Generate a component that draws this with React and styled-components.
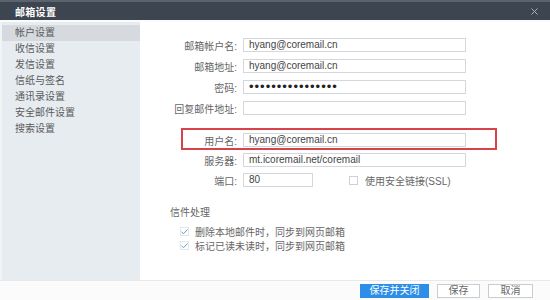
import React from 'react';
import styled, { createGlobalStyle } from 'styled-components';

const GlobalStyle = createGlobalStyle`
  html, body {
    margin: 0;
    padding: 0;
    background: #ffffff;
  }
  body {
    font-family: "Liberation Sans", "Noto Sans CJK SC", sans-serif;
    font-size: 10px;
    color: #666;
  }
`;

const Window = styled.div`
  width: 550px;
  height: 300px;
  display: flex;
  flex-direction: column;
  background: #fbfbfc;
  overflow: hidden;
`;

const TitleBar = styled.div`
  height: 18px;
  border-top: 2px solid #5b646e;
  background: #3c4550;
  display: flex;
  align-items: center;
  justify-content: space-between;
  padding: 0 12px 0 15px;
`;

const Title = styled.div`
  color: #ffffff;
  font-weight: bold;
  font-size: 10px;
  letter-spacing: 0.3px;
`;

const Body = styled.div`
  display: flex;
  height: 258px;
  margin-top: 2px;
  border-bottom: 1px solid #e6e8ea;
`;

const Sidebar = styled.div`
  width: 138px;
  border-left: 2px solid #f1f4f6;
  background: #e7ecf1;
  padding-top: 3px;
`;

const NavItem = styled.div`
  height: 16px;
  line-height: 16px;
  padding-left: 13px;
  color: #5a5a5a;
  background: ${p => (p.$active ? '#d6dadf' : 'transparent')};
`;

const Panel = styled.div`
  flex: 1;
  background: #ffffff;
  padding: 16px 0 0 2px;
`;

const Row = styled.div`
  position: relative;
  display: flex;
  align-items: center;
  gap: 6px;
  width: fit-content;
  height: 14px;
  margin-top: ${p => p.$gap ?? 7}px;

  ${p => p.$highlight && `
    &::after {
      content: '';
      position: absolute;
      left: 39px;
      right: -31px;
      top: -5px;
      bottom: -3px;
      border: 2px solid #d8434b;
      pointer-events: none;
    }
  `}
`;

const Label = styled.div`
  width: 95px;
  text-align: right;
  color: #666;
  white-space: nowrap;
`;

const Field = styled.div`
  box-sizing: border-box;
  width: ${p => p.$width ?? 223}px;
  height: 14px;
  border: 1px solid #d4d8dd;
  padding: 0 5px;
  line-height: 12px;
  color: #444;
  white-space: nowrap;
  overflow: hidden;
`;

const Dots = styled.span`
  font-size: 13px;
  letter-spacing: 1px;
  color: #222;
  line-height: 12px;
`;

const Box = styled.span`
  box-sizing: border-box;
  width: 9px;
  height: 9px;
  border: 1px solid #cdd1d5;
  margin-left: 30px;
  background: #fff;
`;

const BoxText = styled.span`
  margin-left: 1px;
  color: #666;
`;

const Section = styled.div`
  margin-top: 19px;
  padding-left: 28px;
`;

const SectionTitle = styled.div`
  height: 14px;
  line-height: 14px;
  color: #666;
`;

const CheckRow = styled.div`
  display: flex;
  align-items: center;
  gap: 6px;
  height: 14px;
  padding-left: 10px;
  margin-top: ${p => p.$first ? 4 : 0}px;
  color: #666;
`;

const Footer = styled.div`
  flex: 1;
  display: flex;
  justify-content: flex-end;
  align-items: flex-start;
  gap: 8px;
  padding: 3px 17px 0 0;
`;

const Button = styled.div`
  box-sizing: border-box;
  width: ${p => p.$width}px;
  height: 14px;
  line-height: 12px;
  text-align: center;
  font-size: 10px;
  border: 1px solid ${p => (p.$primary ? '#2d8ee8' : '#c9cdd2')};
  background: ${p => (p.$primary ? '#2d8ee8' : '#ffffff')};
  color: ${p => (p.$primary ? '#ffffff' : '#666')};
`;

const CloseIcon = () => (
  <svg width="7" height="7" viewBox="0 0 7 7">
    <path d="M0.5 0.5 L6.5 6.5 M6.5 0.5 L0.5 6.5" stroke="#a9b0b8" strokeWidth="1" />
  </svg>
);

const CheckIcon = () => (
  <svg width="9" height="9" viewBox="0 0 9 9">
    <rect x="0.5" y="0.5" width="8" height="8" fill="#fff" stroke="#e3e7eb" />
    <path d="M1.5 4.8 L3.6 6.6 L7.6 2.4" fill="none" stroke="#6a9bd1" strokeWidth="1" />
  </svg>
);

const navItems = ['帐户设置', '收信设置', '发信设置', '信纸与签名', '通讯录设置', '安全邮件设置', '搜索设置'];

export default function App() {
  return (
    <>
      <GlobalStyle />
      <Window>
        <TitleBar>
          <Title>邮箱设置</Title>
          <CloseIcon />
        </TitleBar>
        <Body>
          <Sidebar>
            {navItems.map((item, i) => (
              <NavItem key={item} $active={i === 0}>{item}</NavItem>
            ))}
          </Sidebar>
          <Panel>
            <Row $gap={0}>
              <Label>邮箱帐户名:</Label>
              <Field>hyang@coremail.cn</Field>
            </Row>
            <Row>
              <Label>邮箱地址:</Label>
              <Field>hyang@coremail.cn</Field>
            </Row>
            <Row>
              <Label>密码:</Label>
              <Field><Dots>••••••••••••••••</Dots></Field>
            </Row>
            <Row>
              <Label>回复邮件地址:</Label>
              <Field />
            </Row>
            <Row $gap={18} $highlight>
              <Label>用户名:</Label>
              <Field>hyang@coremail.cn</Field>
            </Row>
            <Row $gap={6}>
              <Label>服务器:</Label>
              <Field>mt.icoremail.net/coremail</Field>
            </Row>
            <Row $gap={6}>
              <Label>端口:</Label>
              <Field $width={70}>80</Field>
              <Box />
              <BoxText>使用安全链接(SSL)</BoxText>
            </Row>
            <Section>
              <SectionTitle>信件处理</SectionTitle>
              <CheckRow $first>
                <CheckIcon />
                <span>删除本地邮件时，同步到网页邮箱</span>
              </CheckRow>
              <CheckRow>
                <CheckIcon />
                <span>标记已读未读时，同步到网页邮箱</span>
              </CheckRow>
            </Section>
          </Panel>
        </Body>
        <Footer>
          <Button $primary $width={69}>保存并关闭</Button>
          <Button $width={43}>保存</Button>
          <Button $width={45}>取消</Button>
        </Footer>
      </Window>
    </>
  );
}
